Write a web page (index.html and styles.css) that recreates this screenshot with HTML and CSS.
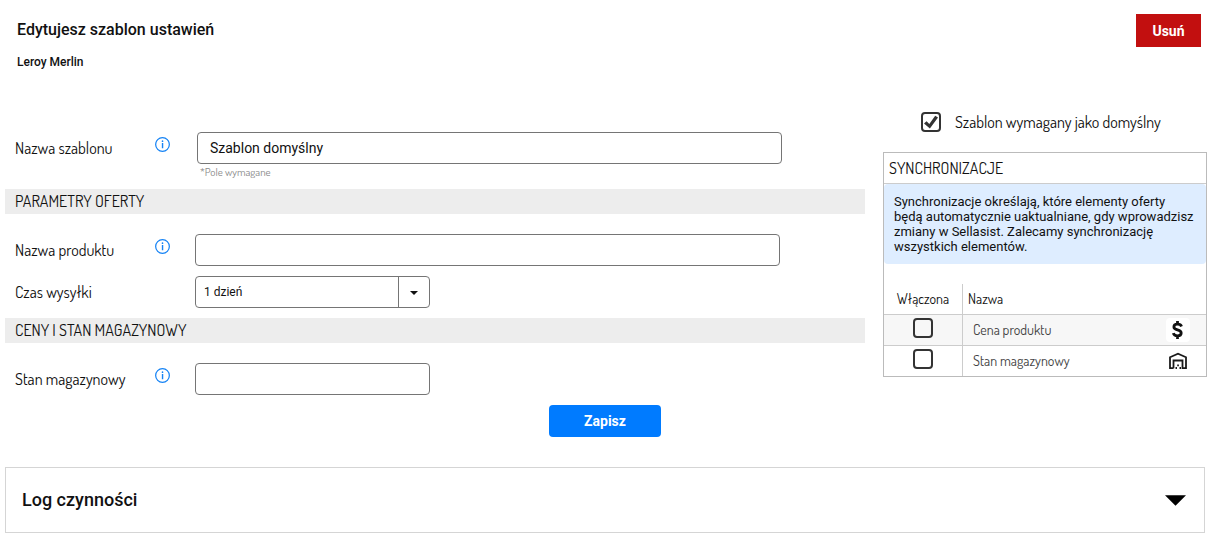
FILE: index.html
```html
<!DOCTYPE html>
<html lang="pl">
<head>
  <meta charset="UTF-8">
  <title>Edytujesz szablon ustawień</title>
  <link rel="stylesheet" href="styles.css">
</head>
<body>

  <svg class="sprite" aria-hidden="true">
    <symbol id="info" viewBox="0 0 16 16">
      <circle cx="8" cy="8" r="7.3" fill="none" stroke="currentColor" stroke-width="1.3"/>
      <rect x="7.3" y="6.4" width="1.5" height="5.6" fill="currentColor"/>
      <circle cx="8" cy="4.4" r="0.9" fill="currentColor"/>
    </symbol>
  </svg>

  <header class="header">
    <div>
      <h1>Edytujesz szablon ustawień</h1>
      <p class="platform">Leroy Merlin</p>
    </div>
    <button type="button" class="btn-delete">Usuń</button>
  </header>

  <form onsubmit="event.preventDefault();">
    <div class="content">

      <!-- formularz -->
      <div class="main">
        <div class="row">
          <label for="templateName">Nazwa szablonu</label>
          <svg class="info"><use href="#info"/></svg>
          <div class="field field-required">
            <input type="text" id="templateName" class="input" value="Szablon domyślny">
            <small class="hint">*Pole wymagane</small>
          </div>
        </div>

        <h2 class="section">PARAMETRY OFERTY</h2>
        <div class="row">
          <label for="productName">Nazwa produktu</label>
          <svg class="info"><use href="#info"/></svg>
          <div class="field">
            <input type="text" id="productName" class="input">
          </div>
        </div>
        <div class="row">
          <label for="shippingTime">Czas wysyłki</label>
          <div class="field field-short select">
            <select id="shippingTime" class="input">
              <option>1 dzień</option>
              <option>2 dni</option>
              <option>3 dni</option>
            </select>
          </div>
        </div>

        <h2 class="section">CENY I STAN MAGAZYNOWY</h2>
        <div class="row">
          <label for="stock">Stan magazynowy</label>
          <svg class="info"><use href="#info"/></svg>
          <div class="field field-short">
            <input type="text" id="stock" class="input">
          </div>
        </div>
      </div>

      <!-- synchronizacje -->
      <aside class="side">
        <div class="default">
          <input type="checkbox" id="isDefault" class="check" checked>
          <label for="isDefault">Szablon wymagany jako domyślny</label>
        </div>
        <div class="panel">
          <h2>SYNCHRONIZACJE</h2>
          <p class="panel-info">Synchronizacje określają, które elementy oferty będą automatycznie uaktualniane, gdy wprowadzisz zmiany w Sellasist. Zalecamy synchronizację wszystkich elementów.</p>
          <table>
            <thead>
              <tr>
                <th class="col-check">Włączona</th>
                <th>Nazwa</th>
              </tr>
            </thead>
            <tbody>
              <tr>
                <td class="col-check"><input type="checkbox" id="syncPrice" class="check"></td>
                <td>
                  <div class="name">
                    <label for="syncPrice">Cena produktu</label>
                    <svg class="icon" viewBox="0 0 24 24">
                      <path d="M15.500 8.500C15 7 13.500 6.200 11.500 6.200 9.300 6.200 7.900 7.200 7.900 8.900 7.900 12.800 15.200 11 15.200 15 15.200 16.800 13.700 17.800 11.500 17.800 9.300 17.800 7.800 16.900 7.300 15.200M11.500 3V6.200M11.500 17.800V21" fill="none" stroke="#111" stroke-width="2.800"/>
                    </svg>
                  </div>
                </td>
              </tr>
              <tr>
                <td class="col-check"><input type="checkbox" id="syncStock" class="check"></td>
                <td>
                  <div class="name">
                    <label for="syncStock">Stan magazynowy</label>
                    <svg class="icon" viewBox="0 0 24 24">
                      <path d="M7.500 19.200H4V8.300L12 4.800 20 8.300V19.200H16.500V11.500H7.500V19.200" fill="none" stroke="#1a1a1a" stroke-width="1.800"/>
                      <path d="M9.500 18h1.500v2H9.500zM13.500 18H15v2h-1.500zM11.200 15.500h1.700v1.700h-1.700z" fill="#1a1a1a"/>
                    </svg>
                  </div>
                </td>
              </tr>
            </tbody>
          </table>
        </div>
      </aside>
    </div>

    <div class="actions">
      <button type="submit" class="btn-save">Zapisz</button>
    </div>
  </form>

  <details class="log">
    <summary>
      <span>Log czynności</span>
      <svg class="arrow" viewBox="0 0 22 11"><path d="M0 0H22L11 11Z"/></svg>
    </summary>
  </details>

</body>
</html>
```

FILE: styles.css
```css
* {
  box-sizing: border-box;
}
body {
  margin: 0;
  padding: 14px 6px 13px 5px;
  background: #fff;
  color: #111;
  font-family: Dosis, Lato, sans-serif;
  font-size: 16px;
  line-height: 20px;
}
h1, h2, p {
  margin: 0;
  font-weight: normal;
}
.sprite {
  display: none;
}
.header {
  display: flex;
  justify-content: space-between;
  align-items: flex-start;
  height: 98px;
  padding: 0 6px 0 12px;
  font-family: Roboto, sans-serif;
}
.header h1 {
  padding-top: 6px;
  font-size: 16px;
  font-weight: 500;
}
.platform {
  margin-top: 12px;
  font-size: 12px;
  font-weight: 500;
}
button {
  border: none;
  color: #fff;
  font-family: Roboto, sans-serif;
  font-size: 14px;
  font-weight: bold;
  cursor: pointer;
}
.btn-delete {
  width: 65px;
  height: 33px;
  padding: 0;
  background: #c20f0f;
}
.content {
  display: flex;
  gap: 18px;
}
.main {
  flex: 1;
  padding-top: 20px;
}
.row {
  display: grid;
  grid-template-columns: 140px 40px 1fr;
  margin-bottom: 10px;
  padding-left: 10px;
}
.row label {
  line-height: 32px;
}
.info {
  width: 15px;
  height: 15px;
  margin-top: 5px;
  color: #1583f5;
}
.field {
  grid-column: 3;
  margin-right: 85px;
}
.field-required {
  margin-left: 2px;
  margin-right: 83px;
}
.field-short {
  width: 235px;
}
.input {
  display: block;
  width: 100%;
  height: 32px;
  padding: 0 12px;
  border: 1px solid #757575;
  border-radius: 4px;
  background: #fff;
  color: #111;
  font-family: Roboto, sans-serif;
  font-size: 14px;
}
.select {
  position: relative;
}
.select .input {
  appearance: none;
  padding: 0 40px 0 8px;
  background: linear-gradient(#757575, #757575) no-repeat right 30px top / 1px 100%;
  font-size: 12px;
}
.select::after {
  content: "";
  position: absolute;
  top: 15px;
  right: 12px;
  border: 4px solid transparent;
  border-top-color: #111;
  border-bottom: none;
  pointer-events: none;
}
.hint {
  display: block;
  padding: 2px 3px 0;
  color: #8a8a8a;
  font-size: 11px;
  line-height: 13px;
}
.section {
  margin-bottom: 20px;
  padding: 0 10px;
  background: #ededed;
  font-size: 16px;
  line-height: 25px;
}
.side {
  width: 324px;
}
.default {
  display: flex;
  align-items: center;
  gap: 14px;
  height: 20px;
  margin-bottom: 20px;
  padding-left: 38px;
}
.check {
  appearance: none;
  flex: none;
  display: inline-grid;
  place-content: center;
  width: 20px;
  height: 20px;
  margin: 0;
  border: 2px solid #333;
  border-radius: 4px;
  background: #fff;
}
.check:checked::before {
  content: "";
  width: 14px;
  height: 14px;
  background: #333;
  clip-path: polygon(0 60%, 18% 44%, 38% 64%, 80% 6%, 100% 18%, 42% 96%);
}
.panel {
  border: 1px solid #bbb;
}
.panel h2 {
  padding: 0 5px;
  border-bottom: 1px solid #ccc;
  font-size: 16px;
  line-height: 30px;
}
.panel-info {
  margin-bottom: 20px;
  padding: 10px;
  border-radius: 4px;
  background: #deedff;
  font-family: Roboto, sans-serif;
  font-size: 13px;
  line-height: 15px;
}
table {
  width: 100%;
  border-collapse: separate;
  border-spacing: 0;
  font-size: 14px;
}
th, td {
  height: 31px;
  padding: 0;
  border-bottom: 1px solid #ccc;
}
th {
  padding-left: 5px;
  font-weight: normal;
  text-align: left;
}
td {
  color: #444;
}
tbody tr:first-child {
  background: #f7f7f7;
}
tbody tr:last-child td {
  height: 30px;
  border-bottom: none;
}
.col-check {
  width: 79px;
  padding: 0;
  border-right: 1px solid #ccc;
  text-align: center;
}
td .check {
  display: block;
  margin: 0 auto 4px;
  background: none;
}
.name {
  display: flex;
  justify-content: space-between;
  align-items: center;
  padding: 0 16px 0 10px;
}
.icon {
  width: 24px;
  height: 24px;
  border-radius: 4px;
  background: #fff;
}
.actions {
  margin-bottom: 30px;
  padding-right: 2px;
  text-align: center;
}
.btn-save {
  width: 112px;
  height: 32px;
  border-radius: 4px;
  background: #007bff;
}
.log {
  margin-right: 2px;
  border: 1px solid #d5d5d5;
}
.log summary {
  display: flex;
  justify-content: space-between;
  align-items: center;
  padding: 22px 18px 22px 16px;
  font-family: Roboto, sans-serif;
  font-size: 18px;
  font-weight: 500;
  cursor: pointer;
}
.arrow {
  width: 21px;
  height: 11px;
}
```
